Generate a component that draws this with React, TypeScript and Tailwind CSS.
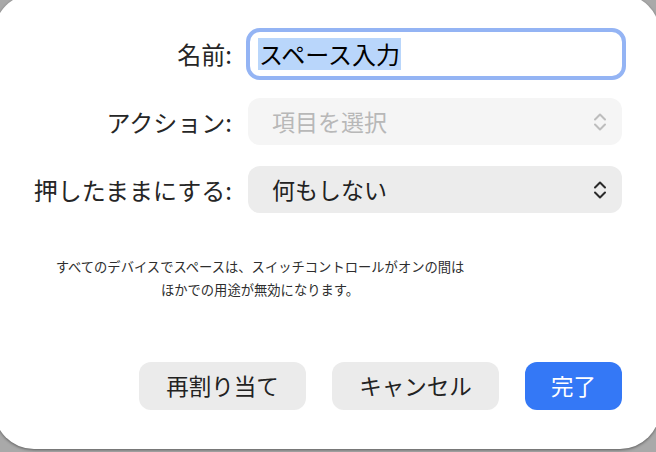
import React from "react";

function Chevrons({ tone }: { tone: string }) {
  return (
    <svg width="16" height="24" viewBox="0 0 16 24" fill="none" className={tone}>
      <path d="M3 9.5 8 4.5 13 9.5" stroke="currentColor" strokeWidth="2" strokeLinecap="round" strokeLinejoin="round" />
      <path d="M3 14.5 8 19.5 13 14.5" stroke="currentColor" strokeWidth="2" strokeLinecap="round" strokeLinejoin="round" />
    </svg>
  );
}

export default function App() {
  return (
    <div
      className="w-[656px] h-[452px] overflow-hidden bg-[#a9a9a9]"
      style={{ fontFamily: '"Noto Sans CJK JP", "Noto Sans", sans-serif' }}
    >
      <div className="-ml-[6px] -mt-[6px] w-[666px] h-[455px] rounded-[40px] bg-white shadow-[0_1px_3px_rgba(0,0,0,0.45)] flex flex-col text-[#262626]">
        {/* form rows */}
        <div className="mt-[34px] pl-[12px] grid grid-cols-[226px_374px] gap-x-[16px] items-center">
          <div className="text-right text-[24px] leading-none">名前:</div>
          <div className="-ml-[2px] w-[380px] h-[52px] rounded-[14px] border-[4px] border-[#94b4f4] bg-white flex items-center pl-[8px]">
            <span className="bg-[#b9d6fb] text-[24px] leading-[32px] text-black px-[1px]">スペース入力</span>
          </div>

          <div className="mt-[18px] text-right text-[24px] leading-none">アクション:</div>
          <div className="mt-[18px] h-[47px] rounded-[12px] bg-[#f5f5f5] flex items-center justify-between pl-[24px] pr-[14px]">
            <span className="text-[23px] text-[#b8b8b8]">項目を選択</span>
            <Chevrons tone="text-[#bdbdbd]" />
          </div>

          <div className="mt-[21px] text-right text-[24px] leading-none">押したままにする:</div>
          <div className="mt-[21px] h-[47px] rounded-[12px] bg-[#ececec] flex items-center justify-between pl-[24px] pr-[14px]">
            <span className="text-[23px] text-[#222]">何もしない</span>
            <Chevrons tone="text-[#2a2a2a]" />
          </div>
        </div>

        {/* description */}
        <div className="mt-[42px] ml-[36px] w-[460px] text-center text-[13.3px] leading-[23px] whitespace-nowrap text-[#2e2e2e]">
          すべてのデバイスでスペースは、スイッチコントロールがオンの間は
          <br />
          ほかでの用途が無効になります。
        </div>

        {/* buttons */}
        <div className="mt-[61px] ml-[145px] flex gap-[26px] text-[22.5px]">
          <button className="w-[167px] h-[48px] rounded-[12px] bg-[#ebebeb] text-[#222]">再割り当て</button>
          <button className="w-[167px] h-[48px] rounded-[12px] bg-[#ebebeb] text-[#222]">キャンセル</button>
          <button className="w-[97px] h-[48px] rounded-[12px] bg-[#3478f6] text-white">完了</button>
        </div>
      </div>
    </div>
  );
}
